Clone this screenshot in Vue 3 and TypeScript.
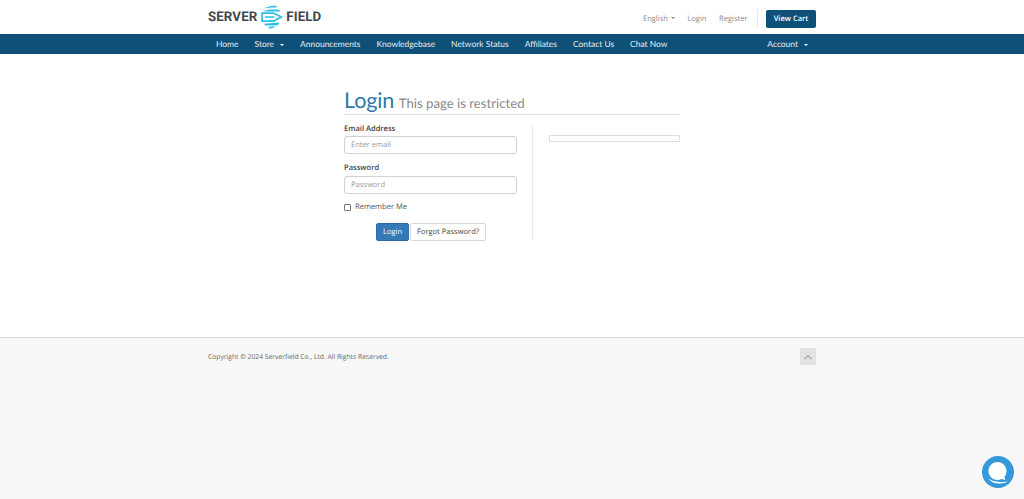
<script setup lang="ts">
const navLeft = [
  { label: "Home" },
  { label: "Store", caret: true },
  { label: "Announcements" },
  { label: "Knowledgebase" },
  { label: "Network Status" },
  { label: "Affiliates" },
  { label: "Contact Us" },
  { label: "Chat Now" },
];
</script>

<template>
  <div class="page">
    <header class="top">
      <div class="wrap top-row">
        <a class="logo">
          <span class="logo-word">SERVER</span>
          <svg class="logo-mark" width="25" height="25" viewBox="0 0 25 25">
            <path d="M5.5 3.6 C9 1 14 .2 18.5 1.2 L16.5 2.6 C12.8 2.2 9 2.6 5.5 3.6Z" fill="#2bbfe6" />
            <path d="M4 6.2 C8 4.4 14 4 20 4.8 L21.6 6.6 L8 6.4 Z" fill="#2bbfe6" />
            <path d="M3 8.2 H14.5 L22.5 12 L14.5 16.2 H3 Z" fill="none" stroke="#2bbfe6" stroke-width="1.7" stroke-linejoin="round" />
            <path d="M6 12 H15.5" fill="none" stroke="#2bbfe6" stroke-width="1.5" />
            <path d="M4.5 18.8 L20.5 17.6 C20 18.6 19.4 19.4 18.6 20.2 L7 20.4 Z" fill="#2bbfe6" />
            <path d="M8 21.8 L17 21.2 C14.6 23 11.6 23.8 8.6 23.4 L11 22.6 Z" fill="#2bbfe6" />
          </svg>
          <span class="logo-word">FIELD</span>
        </a>
        <div class="top-links">
          <span class="top-link">English <i class="caret caret-grey"></i></span>
          <span class="top-link">Login</span>
          <span class="top-link">Register</span>
          <span class="top-sep"></span>
          <button class="cart">View Cart</button>
        </div>
      </div>
    </header>

    <nav class="nav">
      <div class="wrap nav-row">
        <ul class="nav-list">
          <li v-for="item in navLeft" :key="item.label">
            {{ item.label }}<i v-if="item.caret" class="caret"></i>
          </li>
        </ul>
        <ul class="nav-list">
          <li>Account<i class="caret"></i></li>
        </ul>
      </div>
    </nav>

    <main class="main">
      <section class="login">
        <div class="head">
          <h1>Login</h1>
          <small>This page is restricted</small>
        </div>
        <div class="cols">
          <form class="form" @submit.prevent>
            <label class="field-label">Email Address</label>
            <input class="input" type="text" placeholder="Enter email" />
            <label class="field-label second">Password</label>
            <input class="input" type="password" placeholder="Password" />
            <label class="remember">
              <span class="box"></span>
              Remember Me
            </label>
            <div class="actions">
              <button class="btn btn-primary">Login</button>
              <button class="btn btn-default">Forgot Password?</button>
            </div>
          </form>
          <aside class="side">
            <div class="empty-panel"></div>
          </aside>
        </div>
      </section>
    </main>

    <footer class="footer">
      <div class="wrap foot-row">
        <p>Copyright © 2024 Serverfield Co., Ltd. All Rights Reserved.</p>
        <a class="to-top">
          <svg width="10" height="6" viewBox="0 0 10 6">
            <path d="M1.5 5 L5 1.8 L8.5 5" fill="none" stroke="#b0b0b0" stroke-width="1.6" />
          </svg>
        </a>
      </div>
    </footer>

    <button class="chat" aria-label="Chat">
      <svg width="32" height="32" viewBox="0 0 32 32">
        <path d="M15.5 6 C20.5 6 24.5 10 24.5 15 C24.5 17.6 23.6 19.6 22.2 21.2 L23.6 24 L19.6 23 C18.4 23.6 17 24 15.5 24 C10.5 24 6.5 20 6.5 15 C6.5 10 10.5 6 15.5 6Z" fill="#fff" />
        <path d="M6.5 22.4 C10 25.6 19 26.4 26 25.6 C20 29 10 28 6.5 22.4Z" fill="#fff" />
      </svg>
    </button>
  </div>
</template>

<style>
html,
body {
  margin: 0;
  background: #fff;
}
</style>

<style scoped>
.page {
  position: relative;
  display: flex;
  flex-direction: column;
  height: 499px;
  overflow: hidden;
  font-family: "Open Sans", "Liberation Sans", sans-serif;
  font-size: 7.55px;
  color: #333;
  text-rendering: geometricPrecision;
}
.wrap {
  width: 608px;
  margin: 0 auto;
}

.top {
  height: 34px;
}
.top-row {
  display: flex;
  align-items: center;
  justify-content: space-between;
  height: 34px;
}
.logo {
  display: flex;
  align-items: center;
  gap: 2px;
}
.logo-word {
  font-family: "Roboto", "Open Sans", sans-serif;
  font-size: 13.3px;
  font-weight: 700;
  letter-spacing: 0.1px;
  color: #41484b;
}
.top-links {
  display: flex;
  align-items: center;
  padding-top: 3px;
}
.top-link {
  margin-right: 12.5px;
  color: #888;
  font-size: 7.55px;
}
.top-sep {
  width: 1px;
  height: 19px;
  margin: 0 8px 0 -3px;
  background: #e8e8e8;
}
.cart {
  width: 50px;
  height: 18px;
  padding: 0;
  border: 0;
  border-radius: 2px;
  background: #0f5078;
  color: #fff;
  font: 600 7.55px "Open Sans", sans-serif;
  text-rendering: geometricPrecision;
}
.caret {
  display: inline-block;
  width: 0;
  height: 0;
  margin-left: 6px;
  vertical-align: middle;
  border-top: 2.5px solid #fff;
  border-left: 2.5px solid transparent;
  border-right: 2.5px solid transparent;
}
.caret-grey {
  margin-left: 1px;
  border-top-color: #888;
}

.nav {
  height: 20px;
  background: #0f5078;
}
.nav-row {
  display: flex;
  justify-content: space-between;
}
.nav-list {
  display: flex;
  margin: 0;
  padding: 0;
  list-style: none;
}
.nav-list li {
  padding: 0 8px;
  line-height: 20px;
  color: #e6eef3;
  font-family: "Lato", "Open Sans", sans-serif;
  font-size: 8.45px;
  white-space: nowrap;
}

.main {
  flex: 0 0 283px;
  height: 283px;
}
.login {
  width: 336px;
  margin: 34px auto 0;
}
.head {
  display: flex;
  align-items: baseline;
  gap: 4.5px;
  height: 26px;
  border-bottom: 1px solid #ddd;
}
h1 {
  margin: 0;
  color: #2f78aa;
  font-family: "Lato", sans-serif;
  font-size: 21.6px;
  font-weight: 400;
  line-height: 24px;
  letter-spacing: -0.15px;
}
small {
  color: #888;
  font-family: "Lato", sans-serif;
  font-size: 13.2px;
}
.cols {
  display: flex;
}
.form {
  display: flex;
  flex-direction: column;
  width: 173px;
  padding-top: 8px;
}
.field-label {
  margin-bottom: 1px;
  font-weight: 600;
  font-size: 7.55px;
  line-height: 12px;
  color: #444;
}
.second {
  margin-top: 8px;
  margin-bottom: 2px;
}
.input {
  box-sizing: border-box;
  width: 173px;
  height: 18px;
  padding: 0 6px;
  border: 1px solid #d0d0d0;
  border-radius: 3px;
  outline: 0;
  font: 7.55px "Open Sans", sans-serif;
  color: #555;
  text-rendering: geometricPrecision;
}
.input::placeholder {
  color: #999;
}
.remember {
  display: flex;
  align-items: center;
  gap: 4px;
  margin-top: 7px;
  font-size: 7.55px;
  line-height: 12px;
  color: #555;
}
.box {
  box-sizing: border-box;
  width: 7px;
  height: 7px;
  border: 1px solid #777;
  border-radius: 1px;
}
.actions {
  display: flex;
  justify-content: center;
  gap: 1px;
  margin-top: 10px;
  padding-left: 1px;
}
.btn {
  height: 18px;
  padding: 0;
  border-radius: 2px;
  font: 7.55px "Open Sans", sans-serif;
  text-rendering: geometricPrecision;
}
.btn-primary {
  width: 33px;
  border: 1px solid #2e6da4;
  background: #337ab7;
  color: #fff;
}
.btn-default {
  width: 76px;
  border: 1px solid #d5d5d5;
  background: #fff;
  color: #444;
}
.side {
  flex: 1;
  height: 105px;
  margin: 9px 0 0 15px;
  padding: 11px 0 0 16px;
  border-left: 1px solid #e9e9e9;
}
.empty-panel {
  box-sizing: border-box;
  height: 7px;
  border: 1px solid #ddd;
  border-radius: 1px;
}

.footer {
  flex: 1;
  border-top: 1px solid #ddd;
  background: #f7f7f7;
}
.foot-row {
  display: flex;
  align-items: flex-start;
  justify-content: space-between;
  padding-top: 10px;
}
.foot-row p {
  margin: 2.5px 0 0;
  font-size: 6.75px;
  line-height: 11px;
  color: #666;
}
.to-top {
  display: flex;
  align-items: center;
  justify-content: center;
  width: 16px;
  height: 17px;
  border-radius: 1px;
  background: #e3e3e3;
}

.chat {
  position: absolute;
  right: 10px;
  bottom: 11px;
  display: flex;
  align-items: center;
  justify-content: center;
  width: 32px;
  height: 32px;
  padding: 0;
  border: 0;
  border-radius: 50%;
  background: #3498db;
}
</style>
